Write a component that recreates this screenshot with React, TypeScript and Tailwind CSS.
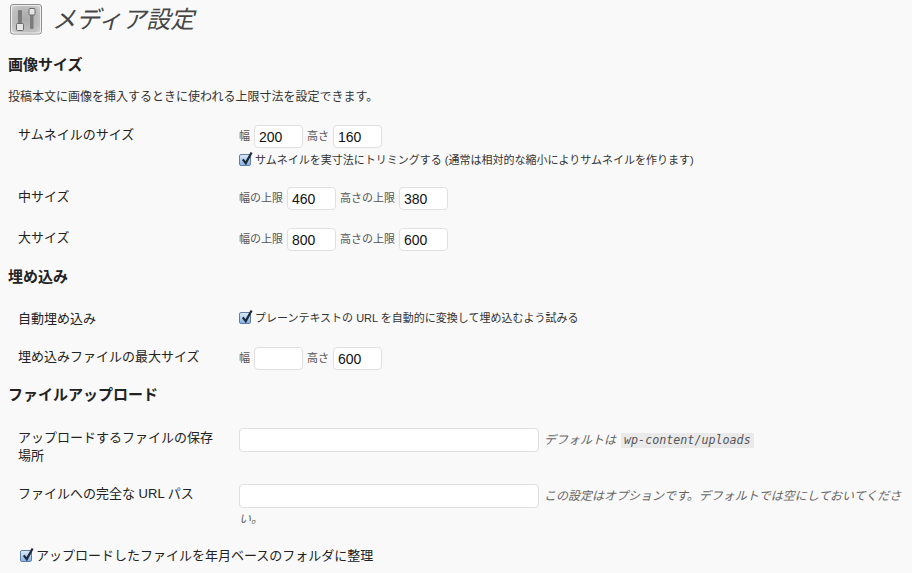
const jp = "font-['Liberation_Sans','Noto_Sans_CJK_JP',sans-serif]";

const NumInput = ({ value }: { value?: string }) => (
  <input
    readOnly
    value={value ?? ""}
    className="w-[49px] h-[23px] bg-white border border-[#e0e0e0] rounded-[4px] px-[4px] text-[14px] text-[#111] outline-none"
  />
);

const TextInput = () => (
  <input
    readOnly
    className="w-[300px] h-[24px] shrink-0 bg-white border border-[#dfdfdf] rounded-[4px] outline-none"
  />
);

const Check = () => (
  <span className="relative w-[12px] h-[12px] shrink-0 rounded-[2px] border border-[#5f7fa8] bg-gradient-to-b from-[#dbe9f8] to-[#86b4e4]">
    <svg viewBox="0 0 14 16" className="absolute left-[0px] top-[-4px] w-[13px] h-[15px]">
      <path d="M3 9 L6.2 13 L12.5 1.5" fill="none" stroke="#1f2a3a" strokeWidth="2.4" />
    </svg>
  </span>
);

const Section = ({ title, className }: { title: string; className: string }) => (
  <h3 className={"pl-2 text-[15px] leading-[20px] font-bold text-[#222] " + className}>{title}</h3>
);

const Row = ({
  label,
  className,
  labelClassName = "",
  children,
}: {
  label: React.ReactNode;
  className: string;
  labelClassName?: string;
  children: React.ReactNode;
}) => (
  <div className={"flex pl-[18px] " + className}>
    <div className={"w-[221px] shrink-0 text-[13px] leading-[18px] text-[#222] pr-[20px] " + labelClassName}>{label}</div>
    <div className="flex-1 min-w-0">{children}</div>
  </div>
);

const SettingsIcon = () => (
  <svg viewBox="0 0 32 31" className="w-[32px] h-[31px] shrink-0">
    <defs>
      <radialGradient id="g" cx="0.5" cy="0.5" r="0.7">
        <stop offset="0" stopColor="#a9a9a9" />
        <stop offset="0.7" stopColor="#c2c2c2" />
        <stop offset="1" stopColor="#e2e2e2" />
      </radialGradient>
    </defs>
    <rect x="0.5" y="0.5" width="31" height="29.5" rx="2.5" fill="url(#g)" stroke="#8f8f8f" />
    <rect x="1.5" y="1.5" width="29" height="27.5" rx="2" fill="none" stroke="#eeeeee" />
    <rect x="8" y="6" width="4" height="14" rx="1" fill="#7c7c7c" />
    <rect x="20" y="10" width="3.5" height="15" rx="1" fill="#7c7c7c" />
    <rect x="6.5" y="19.5" width="7" height="7" rx="1" fill="#e6e6e6" stroke="#6a6a6a" />
    <rect x="19" y="4.5" width="6" height="6.5" rx="1" fill="#e6e6e6" stroke="#6a6a6a" />
  </svg>
);

export default function App() {
  return (
    <div className={"w-[912px] h-[573px] overflow-hidden bg-[#f9f9f9] text-[#333] " + jp}>
      <div className="flex items-start pl-[10px] pt-[4px] gap-[10px] h-[38px]">
        <SettingsIcon />
        <h2 className="pt-[1px] font-['Liberation_Serif','Noto_Sans_CJK_JP',serif] italic text-[24px] leading-[30px] text-[#464646]">
          メディア設定
        </h2>
      </div>

      <Section title="画像サイズ" className="mt-[17px]" />
      <p className="pl-2 mt-[13px] text-[12px] leading-[18px] text-[#333]">
        投稿本文に画像を挿入するときに使われる上限寸法を設定できます。
      </p>

      <Row label="サムネイルのサイズ" labelClassName="pt-[1px]" className="mt-[19px]">
        <div className="flex items-center gap-[4px] text-[11px] text-[#555]">
          <span>幅</span>
          <NumInput value="200" />
          <span>高さ</span>
          <NumInput value="160" />
        </div>
        <div className="flex items-center gap-[4px] mt-[4px] h-[16px] text-[11px] text-[#333]">
          <Check />
          <span>サムネイルを実寸法にトリミングする (通常は相対的な縮小によりサムネイルを作ります)</span>
        </div>
      </Row>

      <Row label="中サイズ" className="mt-[20px]">
        <div className="-mt-[1px] flex items-center gap-[4px] text-[11px] text-[#555]">
          <span>幅の上限</span>
          <NumInput value="460" />
          <span>高さの上限</span>
          <NumInput value="380" />
        </div>
      </Row>

      <Row label="大サイズ" labelClassName="pt-[1px]" className="mt-[18px]">
        <div className="flex items-center gap-[4px] text-[11px] text-[#555]">
          <span>幅の上限</span>
          <NumInput value="800" />
          <span>高さの上限</span>
          <NumInput value="600" />
        </div>
      </Row>

      <Section title="埋め込み" className="mt-[16px]" />

      <Row label="自動埋め込み" labelClassName="pt-[1px]" className="mt-[22px] h-[18px] items-center">
        <div className="flex items-center gap-[4px] text-[11px] text-[#333]">
          <Check />
          <span>プレーンテキストの URL を自動的に変換して埋め込むよう試みる</span>
        </div>
      </Row>

      <Row label="埋め込みファイルの最大サイズ" labelClassName="pt-[1px]" className="mt-[20px]">
        <div className="flex items-center gap-[4px] text-[11px] text-[#555]">
          <span>幅</span>
          <NumInput />
          <span>高さ</span>
          <NumInput value="600" />
        </div>
      </Row>

      <Section title="ファイルアップロード" className="mt-[15px]" />

      <Row label="アップロードするファイルの保存場所" className="mt-[24px]">
        <div className="-mt-[1px] flex items-center gap-[5px]">
          <TextInput />
          <span className="italic text-[12px] text-[#666]">デフォルトは</span>
          <code className="px-[3px] bg-[#eaeaea] font-['DejaVu_Sans_Mono',monospace] italic text-[11.7px] leading-[15px] text-[#555]">
            wp-content/uploads
          </code>
        </div>
      </Row>

      <Row label="ファイルへの完全な URL パス" className="mt-[20px]">
        <div className="-mt-[1px] text-[12px] leading-[23px] italic text-[#666]">
          <TextInput />
          <span className="ml-[5px]">この設定はオプションです。デフォルトでは空にしておいてください。</span>
        </div>
      </Row>

      <div className="flex items-center gap-[4px] pl-[20px] mt-[16px] text-[13px] leading-[18px] text-[#222]">
        <Check />
        <span>アップロードしたファイルを年月ベースのフォルダに整理</span>
      </div>
    </div>
  );
}
